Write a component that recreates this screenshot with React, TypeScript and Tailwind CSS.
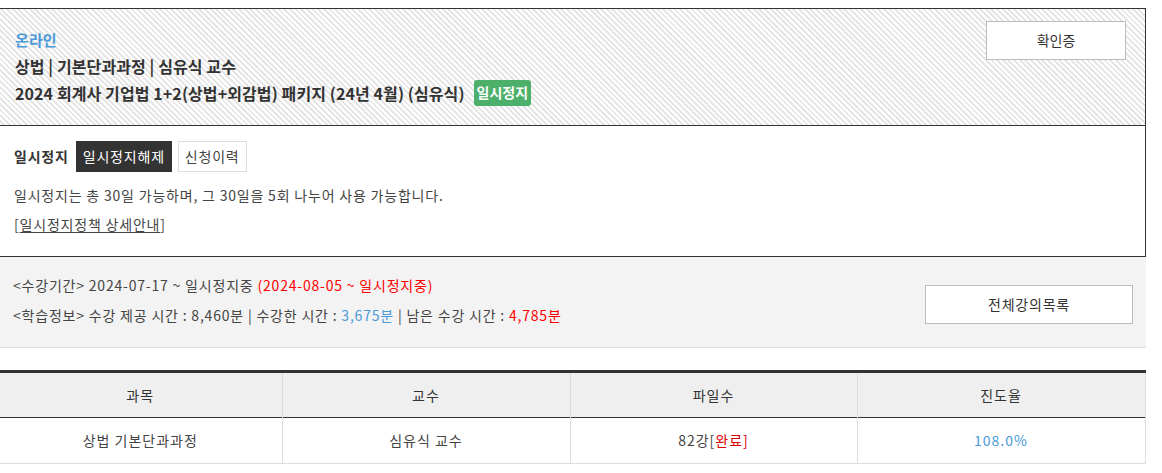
const hatch =
  "bg-[repeating-linear-gradient(45deg,#ffffff_0px,#ffffff_2px,#e6e6e6_2px,#e6e6e6_4px)]";

function TopBox() {
  return (
    <div
      className={`flex h-[118px] justify-between border border-[#333] pl-[15px] pr-[19px] pt-[12px] ${hatch}`}
    >
      <div className="pt-[6px] font-bold tracking-[0.1px] text-[#333]">
        <p className="text-[15px] leading-[26px] text-[#4a9ad8]">온라인</p>
        <p className="text-[16px] leading-[26px]">상법 | 기본단과과정 | 심유식 교수</p>
        <div className="flex h-[27px] items-center gap-[9px]">
          <span className="text-[16px]">
            2024 회계사 기업법 1+2(상법+외감법) 패키지 (24년 4월) (심유식)
          </span>
          <span className="flex h-[26px] items-center rounded-[3px] bg-[#4cb06a] px-[3px] text-[14px] tracking-normal text-white">
            일시정지
          </span>
        </div>
      </div>
      <button className="h-[39px] w-[140px] border border-[#bbb] bg-white text-[14px] text-[#333]">
        확인증
      </button>
    </div>
  );
}

function PauseBox() {
  return (
    <div className="border-x border-b border-[#333] bg-white pl-[14px] pt-[15px] pb-[22px] text-[14px] tracking-[0.8px] text-[#333]">
      <div className="flex h-[31px] items-center">
        <span className="mr-[7px] font-bold">일시정지</span>
        <span className="flex h-[31px] items-center bg-[#333] px-[7px] text-white">일시정지해제</span>
        <span className="ml-[6px] flex h-[31px] items-center border border-[#ddd] px-[6px] text-[#444]">
          신청이력
        </span>
      </div>
      <p className="mt-[13px] leading-[20px] text-[#444]">
        일시정지는 총 30일 가능하며, 그 30일을 5회 나누어 사용 가능합니다.
      </p>
      <p className="mt-[9px] leading-[20px] text-[#444]">
        [<span className="underline underline-offset-2">일시정지정책 상세안내</span>]
      </p>
    </div>
  );
}

function StudyInfo() {
  return (
    <div className="flex h-[91px] items-center justify-between border-b border-[#ddd] bg-[#f3f3f3] pl-[14px] pr-[13px] text-[14px] text-[#444]">
      <div className="mb-[4px] leading-[30px] tracking-[0.8px]">
        <p>
          &lt;수강기간&gt; 2024-07-17 ~ 일시정지중{" "}
          <span className="text-[#f00]">(2024-08-05 ~ 일시정지중)</span>
        </p>
        <p>
          &lt;학습정보&gt; 수강 제공 시간 : 8,460분 | 수강한 시간 :{" "}
          <span className="text-[#4a9ad8]">3,675분</span> | 남은 수강 시간 :{" "}
          <span className="text-[#f00]">4,785분</span>
        </p>
      </div>
      <button className="mt-[5px] h-[39px] w-[208px] border border-[#bbb] bg-white text-[14px] tracking-[0.8px] text-[#333]">
        전체강의목록
      </button>
    </div>
  );
}

function CourseTable() {
  const cols = ["과목", "교수", "파일수", "진도율"];
  return (
    <table className="mt-[22px] w-[1146px] table-fixed border-collapse text-[14px] tracking-[1px]">
      <colgroup>
        <col className="w-[283px]" />
        <col className="w-[288px]" />
        <col className="w-[287px]" />
        <col className="w-[288px]" />
      </colgroup>
      <thead>
        <tr className="h-[46px] border-t-[3px] border-b border-t-[#333] border-b-[#333] bg-[#efefef] text-[#333]">
          {cols.map((c) => (
            <th key={c} className="border-r border-r-[#ddd] font-normal">
              {c}
            </th>
          ))}
        </tr>
      </thead>
      <tbody>
        <tr className="h-[46px] border-b border-[#ddd] text-center text-[#444]">
          <td className="border-r border-[#ddd]">상법 기본단과과정</td>
          <td className="border-r border-[#ddd]">심유식 교수</td>
          <td className="border-r border-[#ddd]">
            82강[<span className="text-[#d00]">완료]</span>
          </td>
          <td className="border-r border-[#ddd] text-[#4a9ad8]">108.0%</td>
        </tr>
      </tbody>
    </table>
  );
}

export default function App() {
  return (
    <div className="h-[473px] w-[1162px] overflow-hidden bg-white pt-2 font-['Noto_Sans_CJK_KR','Noto_Sans',sans-serif]">
      <div className="-ml-px w-[1147px]">
        <TopBox />
        <PauseBox />
        <StudyInfo />
        <CourseTable />
      </div>
    </div>
  );
}
